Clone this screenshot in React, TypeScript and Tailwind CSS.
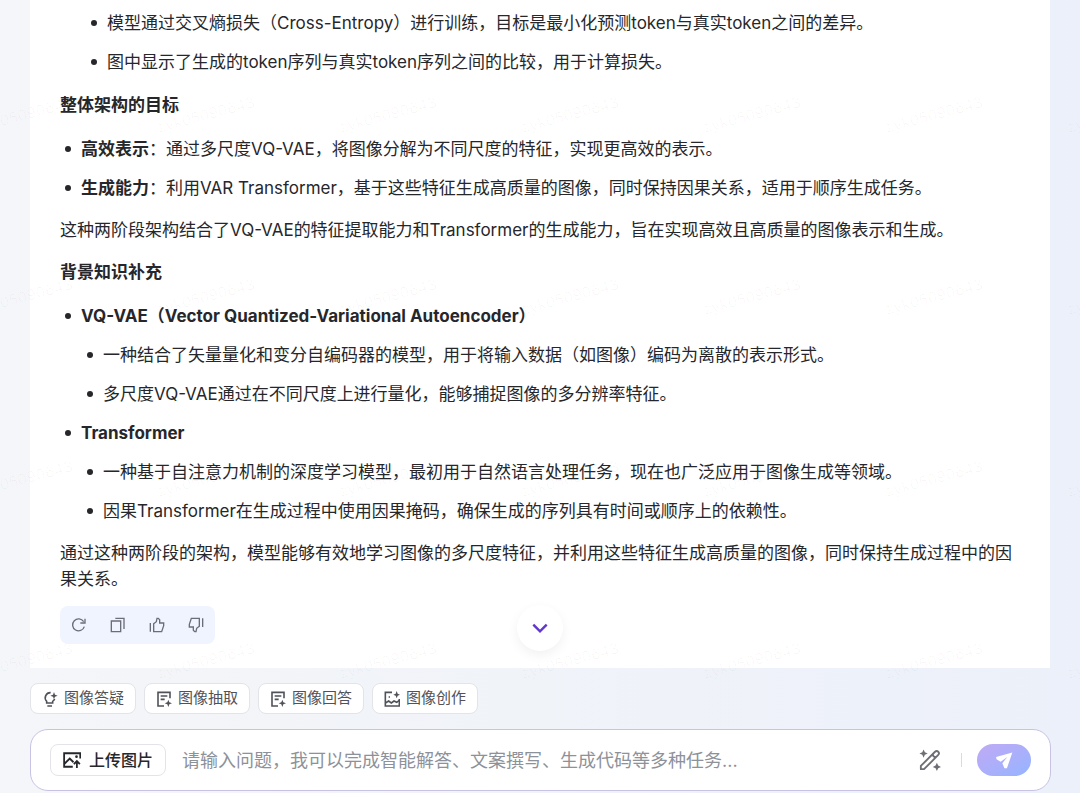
import type { ReactNode } from "react";

const WATERMARK = "zyk05090643";
const WATERMARK_ROWS = [0, 1, 2, 3];
const WATERMARK_COLS = [0, 1, 2, 3, 4, 5, 6];

const svgProps = {
  viewBox: "0 0 24 24",
  fill: "none",
  stroke: "currentColor",
  strokeWidth: 2,
  "aria-hidden": true,
} as const;

type IconProps = { className?: string };

function BulbIcon({ className }: IconProps) {
  return (
    <svg {...svgProps} strokeWidth={2.4} className={className}>
      <path d="M13 2.500A7.700 7.700 0 0 0 7 15.500V18h9v-2.500a7.500 7.500 0 0 0 3-3.500M8 22.500h7" />
      <path d="M18 1.500l1.500 4 4 1.500-4 1.500-1.500 4-1.500-4-4-1.500 4-1.500z" fill="currentColor" stroke="none" />
    </svg>
  );
}

function DocIcon({ className }: IconProps) {
  return (
    <svg {...svgProps} strokeWidth={2.4} className={className}>
      <path d="M21 11V2H3v20.500h9M7 7.500h10M7 12.500h6" />
      <path d="M18.500 13l1.500 4 4 1.500-4 1.500-1.500 4-1.500-4-4-1.500 4-1.500z" fill="currentColor" stroke="none" />
    </svg>
  );
}

function PaintIcon({ className }: IconProps) {
  return (
    <svg {...svgProps} strokeWidth={2.4} className={className}>
      <path d="M12 2H2v20.500h21V12" />
      <path d="M2 18l5-3 4 3 4-3 4 2 4-3M7 9h2" />
      <path d="M19 0l1.500 4 3.500 1.500L20.500 7 19 11l-1.500-4L14 5.500 17.500 4z" fill="currentColor" stroke="none" />
    </svg>
  );
}

function UploadIcon({ className }: IconProps) {
  return (
    <svg {...svgProps} strokeWidth={2.4} className={className}>
      <path d="M23 10V3H1.500v18H13M2 17l7-7 5 5" />
      <path d="M18.500 22.500v-8M14.500 17.500l4-4 4 4" />
      <circle cx="18" cy="7.500" r="1.800" fill="currentColor" stroke="none" />
    </svg>
  );
}

function RefreshIcon({ className }: IconProps) {
  return (
    <svg {...svgProps} className={className}>
      <path d="M20 14.500A9 9 0 1 1 19 7M21 2.500V9h-7" />
    </svg>
  );
}

function CopyIcon({ className }: IconProps) {
  return (
    <svg {...svgProps} className={className}>
      <path d="M2 6h14v16H2zM8 2h13v16" />
    </svg>
  );
}

function ThumbIcon({ className }: IconProps) {
  return (
    <svg {...svgProps} className={className}>
      <path d="M2 9v13M7 10l4-3 1-5h2l2 2v5h6v4l-3 9H7z" />
    </svg>
  );
}

function WandIcon({ className }: IconProps) {
  return (
    <svg {...svgProps} className={className}>
      <path d="M2 18.500L17.500 3a2.500 2.500 0 0 1 3.500 0 2.500 2.500 0 0 1 0 3.500L5.500 22H2zM15 5.500c0 2 1.500 3.500 3.500 3.500" strokeLinejoin="round" />
      <path d="M5 .5l1.400 3.100L9.500 5 6.400 6.400 5 9.500 3.600 6.400.5 5l3.100-1.400zM19.500 15l1.400 3.100 3.100 1.400-3.100 1.400-1.400 3.100-1.400-3.100-3.100-1.400 3.100-1.400z" fill="currentColor" stroke="none" />
    </svg>
  );
}

function Bullet({ children }: { children: ReactNode }) {
  return (
    <li className="flex before:mt-[10px] before:mr-[10px] before:size-[6px] before:shrink-0 before:rounded-full before:bg-[#26272b]">
      <div className="min-w-0 flex-1">{children}</div>
    </li>
  );
}

function SubList({ items }: { items: string[] }) {
  return (
    <ul className="mt-[13px] flex flex-col gap-[13px] pl-[6px]">
      {items.map((item) => (
        <Bullet key={item}>{item}</Bullet>
      ))}
    </ul>
  );
}

function Watermark() {
  return (
    <div aria-hidden className="pointer-events-none absolute inset-0 overflow-hidden">
      <div className="-ml-[26px] flex flex-col gap-[158px] pt-[103px]">
        {WATERMARK_ROWS.map((row) => (
          <div key={row} className="flex gap-[82px]">
            {WATERMARK_COLS.map((col) => (
              <span
                key={col}
                className="w-[100px] shrink-0 -rotate-[15deg] text-[15px] leading-6 text-black/[0.03]"
              >
                {WATERMARK}
              </span>
            ))}
          </div>
        ))}
      </div>
    </div>
  );
}

const feedback = [
  { label: "重新生成", icon: <RefreshIcon className="size-4" /> },
  { label: "复制", icon: <CopyIcon className="size-4" /> },
  { label: "赞", icon: <ThumbIcon className="size-4" /> },
  { label: "踩", icon: <ThumbIcon className="size-4 rotate-180" /> },
];

const tools = [
  { label: "图像答疑", icon: <BulbIcon className="size-4" /> },
  { label: "图像抽取", icon: <DocIcon className="size-4" /> },
  { label: "图像回答", icon: <DocIcon className="size-4" /> },
  { label: "图像创作", icon: <PaintIcon className="size-4" /> },
];

export default function App() {
  return (
    <div className="relative flex min-h-screen flex-col bg-linear-to-r from-[#f5f6f9] via-[#f0f3f8] to-[#ecf0fa] px-[30px] pb-[2px] font-['Inter','Noto_Sans_CJK_SC',sans-serif] text-[#26272b]">
      <main className="relative flex-1 bg-white px-[30px] pt-[10px] pb-6 text-[17px] leading-[26px]">
        <ul className="flex flex-col gap-[13px] pl-[31px]">
          <Bullet>模型通过交叉熵损失（Cross-Entropy）进行训练，目标是最小化预测token与真实token之间的差异。</Bullet>
          <Bullet>图中显示了生成的token序列与真实token序列之间的比较，用于计算损失。</Bullet>
        </ul>

        <h3 className="mt-[17px] font-bold">整体架构的目标</h3>
        <ul className="mt-[18px] flex flex-col gap-[13px] pl-[5px]">
          <Bullet>
            <strong>高效表示</strong>：通过多尺度VQ-VAE，将图像分解为不同尺度的特征，实现更高效的表示。
          </Bullet>
          <Bullet>
            <strong>生成能力</strong>：利用VAR Transformer，基于这些特征生成高质量的图像，同时保持因果关系，适用于顺序生成任务。
          </Bullet>
        </ul>
        <p className="mt-4">
          这种两阶段架构结合了VQ-VAE的特征提取能力和Transformer的生成能力，旨在实现高效且高质量的图像表示和生成。
        </p>

        <h3 className="mt-4 font-bold">背景知识补充</h3>
        <ul className="mt-[18px] flex flex-col gap-[13px] pl-[5px]">
          <Bullet>
            <strong>VQ-VAE（Vector Quantized-Variational Autoencoder）</strong>
            <SubList
              items={[
                "一种结合了矢量量化和变分自编码器的模型，用于将输入数据（如图像）编码为离散的表示形式。",
                "多尺度VQ-VAE通过在不同尺度上进行量化，能够捕捉图像的多分辨率特征。",
              ]}
            />
          </Bullet>
          <Bullet>
            <strong>Transformer</strong>
            <SubList
              items={[
                "一种基于自注意力机制的深度学习模型，最初用于自然语言处理任务，现在也广泛应用于图像生成等领域。",
                "因果Transformer在生成过程中使用因果掩码，确保生成的序列具有时间或顺序上的依赖性。",
              ]}
            />
          </Bullet>
        </ul>
        <p className="mt-4">
          通过这种两阶段的架构，模型能够有效地学习图像的多尺度特征，并利用这些特征生成高质量的图像，同时保持生成过程中的因果关系。
        </p>

        <div className="mt-[14px] flex h-[38px] w-fit items-center gap-[23px] rounded-lg bg-[#f0f4fe] px-[11px] text-[#6b6e78]">
          {feedback.map(({ label, icon }) => (
            <button key={label} type="button" aria-label={label} className="flex w-4 justify-center">
              {icon}
            </button>
          ))}
        </div>

        <button
          type="button"
          aria-label="回到底部"
          className="absolute bottom-[17px] left-1/2 flex size-[46px] -translate-x-1/2 items-center justify-center rounded-full bg-white text-[#6237d0] shadow-[0_4px_12px_rgba(0,0,0,0.06)]"
        >
          <svg {...svgProps} strokeWidth={3} className="size-5">
            <path d="M4 8l8 8 8-8" />
          </svg>
        </button>
      </main>

      <div className="mt-[15px] flex flex-wrap gap-2">
        {tools.map(({ label, icon }) => (
          <button
            key={label}
            type="button"
            className="flex h-[31px] items-center gap-[6px] rounded-lg border border-[#e2e4ea] bg-white px-[11px] text-[15px] text-[#505259]"
          >
            {icon}
            {label}
          </button>
        ))}
      </div>

      <form
        onSubmit={(e) => e.preventDefault()}
        className="-mr-px mt-[15px] flex h-[62px] items-center rounded-[18px] border border-[#c8c2e4] bg-white pr-[19px] pl-[19px]"
      >
        <button
          type="button"
          className="flex h-8 shrink-0 items-center gap-2 rounded-lg border border-[#e2e4ea] px-3 text-[16px] font-medium text-[#26272b]"
        >
          <UploadIcon className="size-[18px]" />
          上传图片
        </button>
        <input
          type="text"
          aria-label="问题"
          placeholder="请输入问题，我可以完成智能解答、文案撰写、生成代码等多种任务..."
          className="ml-4 min-w-0 flex-1 bg-transparent text-[18px] outline-none placeholder:text-[#8d9199]"
        />
        <button type="button" aria-label="润色" className="text-[#6d6f75]">
          <WandIcon className="size-[22px]" />
        </button>
        <span className="mr-[15px] ml-5 h-[14px] w-px bg-[#d9dbe0]" />
        <button
          type="submit"
          aria-label="发送"
          className="flex h-8 w-[54px] items-center justify-center rounded-full bg-linear-to-br from-[#c0a9f5] to-[#94b4ff] text-white"
        >
          <svg viewBox="0 0 24 24" fill="currentColor" aria-hidden className="size-5">
            <path d="M22 3L2.500 8.500 3 11l5 3 8-5.500L10 16l2.500 6h3z" />
          </svg>
        </button>
      </form>

      <Watermark />
    </div>
  );
}
